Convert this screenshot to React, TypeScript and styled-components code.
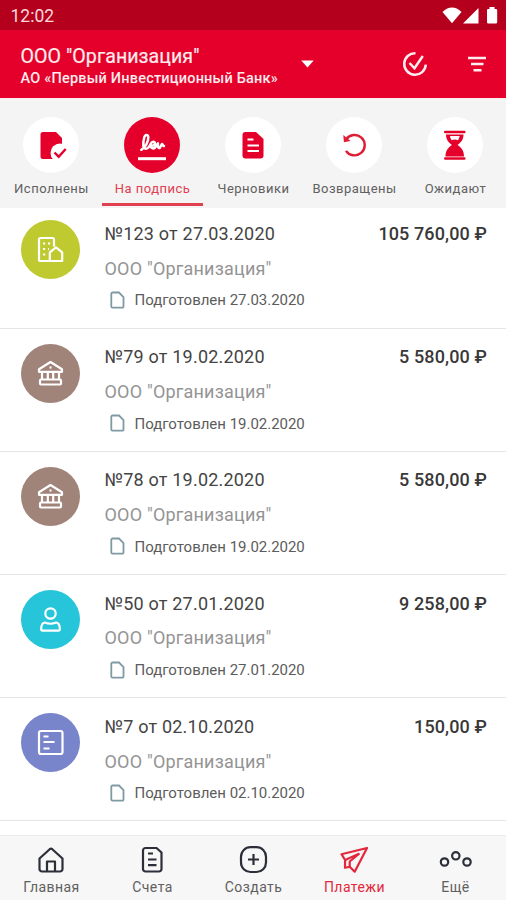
import React from "react";
import styled, { createGlobalStyle } from "styled-components";

const red = "#e4002b";

const GlobalStyle = createGlobalStyle`
  * { box-sizing: border-box; }
  body { margin: 0; background: #fff; overflow: hidden; }
`;

const Screen = styled.div`
  width: 506px;
  height: 900px;
  display: flex;
  flex-direction: column;
  background: #fff;
  overflow: hidden;
  font-family: Roboto, sans-serif;
  white-space: nowrap;
`;

const StatusBar = styled.div`
  flex: none;
  height: 30px;
  padding: 2px 8px 0 10.5px;
  display: flex;
  align-items: center;
  justify-content: space-between;
  background: #b4001c;
  color: #ffd9dc;
  font-size: 17.5px;
`;

const Header = styled.header`
  flex: none;
  height: 68px;
  padding: 0 19px 0 20.5px;
  display: flex;
  align-items: center;
  background: ${red};
`;

const Company = styled.div`
  width: 280.5px;
  padding-top: 6px;
  color: #ffecee;
`;

const CompanyName = styled.div`
  font-size: 19.6px;
  line-height: 23px;
  letter-spacing: 0.05px;
  -webkit-text-stroke: 0.2px currentColor;
`;

const BankName = styled.div`
  font-size: 14.5px;
  line-height: 22px;
  letter-spacing: 0.2px;
  font-weight: 500;
`;

const HeaderActions = styled.div`
  margin-left: auto;
  display: flex;
  align-items: center;
  gap: 39px;
`;

const Tabs = styled.nav`
  flex: none;
  position: relative;
  z-index: 1;
  height: 109.5px;
  padding-left: 1px;
  border-top: 1px solid #fbe9ee;
  display: grid;
  grid-template-columns: repeat(5, 1fr);
  background: #f4f4f4;
`;

const Tab = styled.div<{ $active?: boolean }>`
  height: 107px;
  padding-top: 18px;
  display: flex;
  flex-direction: column;
  align-items: center;
  border-bottom: 3px solid ${(p) => (p.$active ? "#e0404f" : "transparent")};
  color: ${(p) => (p.$active ? "#e0404f" : "#606060")};
  font-size: 13px;
  line-height: 20px;
  letter-spacing: 0.5px;
`;

const TabIcon = styled.div<{ $active?: boolean }>`
  width: 56px;
  height: 56px;
  margin: 0 1px 6px 0;
  border-radius: 50%;
  background: ${(p) => (p.$active ? red : "#fff")};
`;

const List = styled.main`
  flex: 1;
  min-height: 0;
  margin-top: -2.2px;
`;

const Row = styled.article`
  height: 123.2px;
  padding: 0 19px 0 20.5px;
  display: grid;
  grid-template-columns: 84px 1fr auto;
  border-bottom: 1.5px solid #e6e6e6;
`;

const Avatar = styled.div<{ $color: string }>`
  width: 59px;
  height: 59px;
  margin-top: 15px;
  border-radius: 50%;
  background: ${(p) => p.$color};
`;

const Details = styled.div`
  padding-top: 18.7px;
`;

const Title = styled.div`
  font-size: 18px;
  line-height: 20px;
  letter-spacing: 0.2px;
  color: #444;
`;

const Organization = styled.div`
  margin-top: 14.8px;
  font-size: 18px;
  line-height: 20px;
  letter-spacing: 0.2px;
  color: #949494;
`;

const Prepared = styled.div`
  margin-top: 10.7px;
  display: flex;
  align-items: center;
  font-size: 15px;
  line-height: 22px;
  letter-spacing: -0.02px;
  color: #5c5c5c;
`;

const PreparedIcon = styled.svg`
  margin: 0 10px 1px 5px;
`;

const Amount = styled.div`
  padding-top: 18.7px;
  font-size: 18px;
  font-weight: 500;
  line-height: 20px;
  letter-spacing: 0.12px;
  color: #383838;
`;

const BottomBar = styled.nav`
  flex: none;
  height: 65px;
  padding-left: 1px;
  display: grid;
  grid-template-columns: repeat(5, 1fr);
  background: #f7f7f7;
  border-top: 1px solid #ececec;
`;

const NavItem = styled.div<{ $active?: boolean }>`
  padding-top: 7px;
  display: flex;
  flex-direction: column;
  align-items: center;
  color: ${(p) => (p.$active ? "#e3283c" : "#606060")};
  font-size: 14px;
  line-height: 20px;
  letter-spacing: 0.45px;
`;

const NavIcon = styled.svg`
  display: block;
  color: #2c2f3a;
  margin-bottom: 2px;
`;

const Glyph = styled.svg`
  display: block;
`;

const tabs = [
  {
    label: "Исполнены",
    icon: (
      <>
        <path fill={red} d="M20 15h13l6 6v21H20a2.500 2.500 0 0 1-2.500-2.500v-22A2.500 2.500 0 0 1 20 15z" />
        <circle cx="37" cy="36" r="9.500" fill="#fff" />
        <path fill="none" stroke={red} strokeWidth="2.400" d="M31.500 35.500l4.200 4.200 7-7.700" />
      </>
    ),
  },
  {
    label: "На подпись",
    active: true,
    icon: (
      <g fill="none" stroke="#fff" strokeLinecap="round" strokeLinejoin="round">
        <path
          strokeWidth="2.500"
          d="M17.300 32.800c4-2.300 7.200-8 7-12.500-.2-3.300-3.200-3-4 0-1 4-1.800 10.500.7 11.300 2.700.8 4.500-2 5.800-4.800 1.200-2.600 4.200-2.800 4-.3-.3 2.200-3 2.700-4 1.700-.3 3 2.500 4 4.300 2.300 1.500-1.500 1.800-3 2.800-4.200.1 2.200-.1 4.700 1.200 4.800 1.700.1 2-4 3-4 .9 0 .4 2.200 1.900 1.900"
        />
        <path strokeWidth="3" strokeLinecap="butt" d="M14 41.700h28" />
      </g>
    ),
  },
  {
    label: "Черновики",
    icon: (
      <>
        <path fill={red} d="M20.500 15h10.500l7.500 7v16.500a3 3 0 0 1-3 3h-15a3 3 0 0 1-3-3V18a3 3 0 0 1 3-3z" />
        <path stroke="#fff" strokeWidth="2.100" d="M22.500 22.500h6M22.500 28.500h11.500M22.500 34h11.500" />
      </>
    ),
  },
  {
    label: "Возвращены",
    icon: (
      <>
        <path fill="none" stroke="#df1d35" strokeWidth="2.400" d="M20.200 22.300a10.200 10.200 0 1 1-.2 11.500" />
        <path fill="#df1d35" d="M17.300 18l7.200 6-6.600 1.200z" />
      </>
    ),
  },
  {
    label: "Ожидают",
    icon: (
      <>
        <path stroke={red} strokeWidth="2.600" strokeLinecap="round" d="M18.300 15h19M18.300 41.500h19" />
        <path
          fill={red}
          fillRule="evenodd"
          d="M19 17.500h17.500c0 5-2.200 7.500-6 10.500 4.300 2.800 6.500 6 6.500 11.500H18.500c0-5.500 2.200-8.700 6.500-11.500-3.800-3-6-5.500-6-10.500zm4 1.500c.2 1.800.8 3 1.700 4.200 2-1 4.200-1 6.200 0 .9-1.200 1.500-2.400 1.700-4.200z"
        />
      </>
    ),
  },
];

const bank = (
  <>
    <path d="M18 27.800v-2.500L29.500 18l11.500 7.300v2.500z" />
    <path d="M21 28v7M26.800 28v7M32.200 28v7M38 28v7" />
    <rect x="19" y="35.500" width="21" height="5" rx="1" />
    <path d="M28.500 23.500h2" />
  </>
);

const payments = [
  {
    title: "№123 от 27.03.2020",
    amount: "105 760,00 ₽",
    date: "27.03.2020",
    color: "#bfca30",
    icon: (
      <>
        <path d="M28 41h-8.500A1.500 1.500 0 0 1 18 39.500V19.500a1.500 1.500 0 0 1 1.500-1.500h12a1.500 1.500 0 0 1 1.500 1.500v7" />
        <path d="M28.800 41v-8.700l6.200-5 6.200 5V41z" />
        <path d="M22 23.500h2.200M22 29h2.200M22 34.500h2.200M27 23.500h2.200M27 29h1" />
      </>
    ),
  },
  { title: "№79 от 19.02.2020", amount: "5 580,00 ₽", date: "19.02.2020", color: "#a08379", icon: bank },
  { title: "№78 от 19.02.2020", amount: "5 580,00 ₽", date: "19.02.2020", color: "#a08379", icon: bank },
  {
    title: "№50 от 27.01.2020",
    amount: "9 258,00 ₽",
    date: "27.01.2020",
    color: "#26c5da",
    icon: (
      <>
        <circle cx="29.500" cy="23.500" r="5.200" />
        <path d="M23.800 32.500q5.700 2.500 11.400 0c2.500.5 3.600 3.500 3.600 6.500 0 .8-.5 1.700-1.300 1.700h-16c-.8 0-1.300-.9-1.300-1.700 0-3 1.100-6 3.600-6.500z" />
      </>
    ),
  },
  {
    title: "№7 от 02.10.2020",
    amount: "150,00 ₽",
    date: "02.10.2020",
    color: "#7885cb",
    icon: (
      <>
        <rect x="18" y="18" width="23.500" height="23" rx="2" />
        <path d="M22.500 23.500h5M22.500 29h11M22.500 35.500h6" />
      </>
    ),
  },
];

const navItems = [
  {
    label: "Главная",
    icon: (
      <>
        <path d="M6.500 15.500l10.200-9.300a2 2 0 0 1 2.600 0l10.200 9.300v10.500a2.500 2.500 0 0 1-2.500 2.500H9a2.500 2.500 0 0 1-2.500-2.500z" />
        <path d="M14 28v-9.500h8V28" />
      </>
    ),
  },
  {
    label: "Счета",
    icon: (
      <>
        <path d="M11.500 5h11l5 4.500v16.500a2.500 2.500 0 0 1-2.500 2.500H11.500A2.500 2.500 0 0 1 9 26V7.500A2.500 2.500 0 0 1 11.500 5z" />
        <path d="M14 10.500h5M14 16.500h8.500M14 22.200h8.500" />
      </>
    ),
  },
  {
    label: "Создать",
    icon: (
      <>
        <rect x="6" y="4.200" width="25" height="24.800" rx="9.500" />
        <path d="M18.500 11v11M13 16.500h11" />
      </>
    ),
  },
  {
    label: "Платежи",
    active: true,
    icon: (
      <g stroke="#e3283c">
        <path d="M31 5L5.500 11.200l3.600 5.800-.1 7.800 4.700-1.100 5 5z" />
        <path d="M9.200 17L23.500 10.500M13.700 23.700V18.500L23.500 10.500" />
      </g>
    ),
  },
  {
    label: "Ещё",
    icon: (
      <>
        <circle cx="7.500" cy="19" r="3.700" />
        <circle cx="18.800" cy="12.800" r="3.700" />
        <circle cx="30" cy="19" r="3.700" />
      </>
    ),
  },
];

export default function App() {
  return (
    <>
      <GlobalStyle />
      <Screen>
        <StatusBar>
          <span>12:02</span>
          <Glyph width="56" height="18" viewBox="0 0 56 18" fill="#fff">
            <path d="M.5 5Q10-3.800 19.500 5L10 16.200z" />
            <path d="M36.500 1v15.500H21z" />
            <path d="M47.500 0h5v2H54q1.200 0 1.200 1.200v12.100q0 1.200-1.200 1.200h-7.800q-1.200 0-1.200-1.200V3.200Q45 2 46.200 2h1.300z" />
          </Glyph>
        </StatusBar>

        <Header>
          <Company>
            <CompanyName>ООО "Организация"</CompanyName>
            <BankName>АО «Первый Инвестиционный Банк»</BankName>
          </Company>
          <Glyph width="13" height="8" viewBox="0 0 13 8" fill="#fff">
            <path d="M.2.600h12.500L6.500 7.400z" />
          </Glyph>
          <HeaderActions>
            <Glyph width="26" height="26" viewBox="0 0 26 26" fill="none" stroke="#ffecee" strokeWidth="2.500">
              <path d="M13.500 2.200a10.800 10.800 0 1 0 10.300 11.500" />
              <path d="M7.500 12l5 5.300L20.800 5" />
            </Glyph>
            <Glyph width="20" height="18" viewBox="0 0 20 18" stroke="#ffecee" strokeWidth="2.600">
              <path d="M1 3h18M4 9h12.500M6.500 15.300h8" />
            </Glyph>
          </HeaderActions>
        </Header>

        <Tabs>
          {tabs.map((tab) => (
            <Tab key={tab.label} $active={tab.active}>
              <TabIcon $active={tab.active}>
                <Glyph width="56" height="56" viewBox="0 0 56 56">
                  {tab.icon}
                </Glyph>
              </TabIcon>
              {tab.label}
            </Tab>
          ))}
        </Tabs>

        <List>
          {payments.map((payment) => (
            <Row key={payment.title}>
              <Avatar $color={payment.color}>
                <Glyph width="59" height="59" viewBox="0 0 59 59" fill="none" stroke="#fff" strokeWidth="2.200" strokeLinejoin="round">
                  {payment.icon}
                </Glyph>
              </Avatar>
              <Details>
                <Title>{payment.title}</Title>
                <Organization>ООО "Организация"</Organization>
                <Prepared>
                  <PreparedIcon width="15" height="18" viewBox="0 0 15 18" fill="none" stroke="#7f9aa3" strokeWidth="1.800">
                    <path d="M2.500 1.500h6.500l4.500 4.500v9.500a1.200 1.200 0 0 1-1.200 1.200H2.500a1.200 1.200 0 0 1-1.200-1.200V2.700a1.200 1.200 0 0 1 1.200-1.200z" />
                  </PreparedIcon>
                  Подготовлен {payment.date}
                </Prepared>
              </Details>
              <Amount>{payment.amount}</Amount>
            </Row>
          ))}
        </List>

        <BottomBar>
          {navItems.map((item) => (
            <NavItem key={item.label} $active={item.active}>
              <NavIcon width="37" height="32" viewBox="0 0 37 32" fill="none" stroke="currentColor" strokeWidth="2.200" strokeLinejoin="round">
                {item.icon}
              </NavIcon>
              {item.label}
            </NavItem>
          ))}
        </BottomBar>
      </Screen>
    </>
  );
}
